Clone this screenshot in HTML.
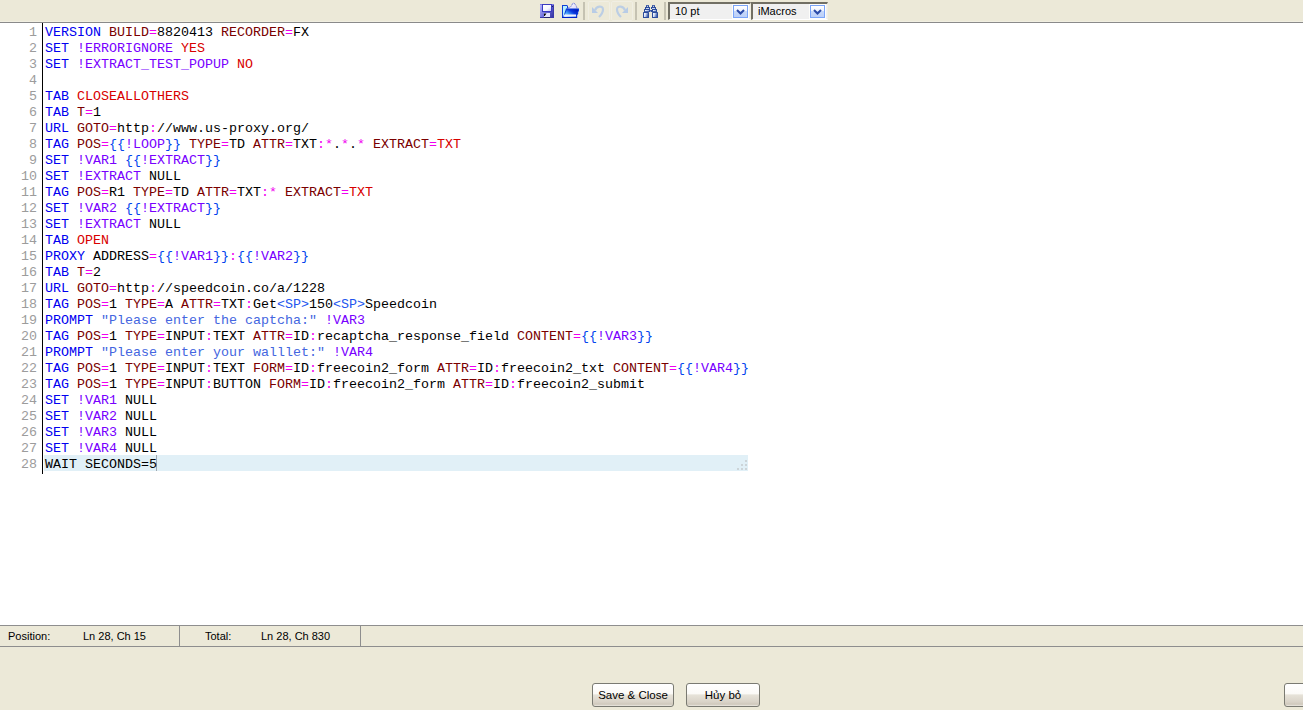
<!DOCTYPE html>
<html><head><meta charset="utf-8">
<style>
*{margin:0;padding:0;box-sizing:border-box}
html,body{width:1303px;height:710px;overflow:hidden;background:#ECE9D8;font-family:"Liberation Sans",sans-serif}
#tb{position:absolute;left:0;top:0;width:1303px;height:23px;background:#ECE9D8;border-bottom:1px solid #8A8A8A}
#tb .hl{position:absolute;left:0;top:21px;width:1303px;height:1px;background:#F1EFE2}
.ic{position:absolute}
.sep{position:absolute;top:2px;width:2px;height:18px;background:#C5C2B2}
.combo{position:absolute;top:2px;height:18px;background:#F0F0F0;border-top:2px solid #716F64;border-left:2px solid #716F64;border-right:1px solid #F1EFE2;border-bottom:1px solid #FFFFFF}
.combo .t{position:absolute;left:5px;top:1px;font-size:11px;color:#000;line-height:13px}
.combo .btn{position:absolute;top:1px;width:15px;height:13px;border:1px solid #7AA4F8;box-shadow:0 0 0 1px #FDFDFB;background:linear-gradient(#FFFFFF 0%,#EEF3FE 45%,#C6D8FA 50%,#BCD0F8 100%)}
#ed{position:absolute;left:0;top:23px;width:1303px;height:602px;background:#fff}
#gut{position:absolute;left:42px;top:23px;width:1px;height:451px;background:#000}
.ln{position:absolute;left:0;width:37px;text-align:right;font-family:"Liberation Mono",monospace;font-size:13.33px;color:#9C9C9C;line-height:16px}
.cl{position:absolute;left:45px;white-space:pre;font-family:"Liberation Mono",monospace;font-size:13.33px;color:#000;line-height:16px}
i{font-style:normal}.k{color:#0000F0}.p{color:#7A0000}.e{color:#F000F0}.r{color:#D80000}.b{color:#0044EE}.v{color:#7800FF}.s{color:#4466E0}.x{color:#2255EE}
#cur{position:absolute;left:44px;top:455px;width:704px;height:16px;background:#E1F0F7}
#status{position:absolute;left:0;top:625px;width:1303px;height:22px;background:#ECE9D8;border-top:1px solid #8E8E8E;border-bottom:1px solid #8E8E8E}
.st{position:absolute;top:4px;font-size:11px;color:#000;line-height:13px}
.dv{position:absolute;top:0;width:1px;height:20px;background:#8E8E8E}
.bt{position:absolute;top:683px;height:24px;border:1px solid #7A7A72;border-radius:3px;background:linear-gradient(#FFFFFF 0%,#FBFAF7 44%,#E6E2D8 50%,#D9D3C8 82%,#CFC8BC 92%,#ECEAE3 100%);font-size:11.5px;line-height:23px;text-align:center;color:#000}
</style></head><body>
<div id="tb"><div class="hl"></div>
<svg class="ic" style="left:540px;top:4px" width="14" height="14" viewBox="0 0 14 14">
<defs><linearGradient id="fl" x1="0" y1="0.2" x2="1" y2="0.8"><stop offset="0" stop-color="#B0B0FA"/><stop offset="0.45" stop-color="#7070DC"/><stop offset="1" stop-color="#3636A4"/></linearGradient>
<linearGradient id="lb" x1="0" y1="0" x2="1" y2="1"><stop offset="0" stop-color="#FFFFFF"/><stop offset="0.6" stop-color="#F6F6FF"/><stop offset="1" stop-color="#C8C8F0"/></linearGradient></defs>
<rect x="0" y="0" width="14" height="14" rx="0.5" fill="url(#fl)"/>
<rect x="13" y="0" width="1" height="14" fill="#3A3AA8"/>
<rect x="0" y="13" width="14" height="1" fill="#3A3AA8"/>
<rect x="0" y="0" width="14" height="1" fill="#7A7AE0"/>
<rect x="2" y="0" width="10" height="8" fill="#3A3AC0"/>
<rect x="3" y="1" width="8" height="6" fill="url(#lb)"/>
<rect x="12" y="2" width="1" height="1" fill="#202060"/>
<rect x="4" y="9" width="6" height="4.5" fill="#E4E4FF"/>
<path d="M4 9.5h2.5l-1.8 2.5h-0.7z" fill="#000"/>
<rect x="4" y="13" width="6" height="1" fill="#262670"/>
</svg>
<svg class="ic" style="left:561px;top:2px" width="19" height="17" viewBox="0 0 19 17">
<defs><linearGradient id="fo" x1="0" y1="1" x2="1" y2="0.2"><stop offset="0" stop-color="#E0FCFF"/><stop offset="0.35" stop-color="#50B0FA"/><stop offset="0.7" stop-color="#0838E0"/><stop offset="1" stop-color="#0018B8"/></linearGradient>
<linearGradient id="pp" x1="0" y1="0" x2="1" y2="1"><stop offset="0" stop-color="#FFFFFF"/><stop offset="1" stop-color="#D8D4F8"/></linearGradient></defs>
<path d="M1 3h5l1 1v12h-6z" fill="#1040D8"/>
<path d="M2 4h4v11h-4z" fill="#B4F0FF"/>
<path d="M5.5 7l4.5-2.5l2-3.5h1l2 2.5l1 2.5v2h-10.5z" fill="url(#pp)" stroke="#5060D0" stroke-width="0.9" stroke-dasharray="1 0.7"/>
<path d="M5 6.5h13v2.5l-0.8 1v2l-1 1v3h-14.2z" fill="#0838D8"/>
<path d="M5.8 7.5h11.2v1.5l-0.8 1v2l-1 1v2h-12.2z" fill="url(#fo)"/>
<path d="M3.3 12.5h11.7v2h-12.2z" fill="#F2EEFF"/>
<path d="M1 15h15v1h-15z" fill="#0020C8"/>
</svg>
<div class="sep" style="left:583px"></div>
<svg class="ic" style="left:591px;top:2px" width="14" height="17" viewBox="0 0 14 17">
<path d="M1 5v6h6z" fill="#B8CCE6"/>
<path d="M4 8.5C5 4 12 3 12 7.5C12 10.5 10 13 8 15" fill="none" stroke="#BCCEE4" stroke-width="2.2"/>
</svg>
<svg class="ic" style="left:615px;top:2px" width="14" height="17" viewBox="0 0 14 17">
<g transform="translate(14,0) scale(-1,1)">
<path d="M1 5v6h6z" fill="#B8CCE6"/>
<path d="M4 8.5C5 4 12 3 12 7.5C12 10.5 10 13 8 15" fill="none" stroke="#BCCEE4" stroke-width="2.2"/>
</g></svg>
<div class="sep" style="left:635px"></div>
<div style="position:absolute;left:588px;top:1px;width:22px;height:20px;border:1px solid #F0EEE3;border-radius:2px"></div>
<div style="position:absolute;left:611px;top:1px;width:22px;height:20px;border:1px solid #F0EEE3;border-radius:2px"></div>
<svg class="ic" style="left:643px;top:5px" width="15" height="13" viewBox="0 0 15 13">
<defs><linearGradient id="bn" x1="0" y1="0" x2="1" y2="0.3"><stop offset="0" stop-color="#FFFFFF"/><stop offset="0.45" stop-color="#D0DCF4"/><stop offset="1" stop-color="#4A68B0"/></linearGradient>
<linearGradient id="bu" x1="0" y1="0" x2="1" y2="0"><stop offset="0" stop-color="#F4F8FF"/><stop offset="1" stop-color="#90A8D8"/></linearGradient></defs>
<g fill="#2C4C9C">
<rect x="3" y="0" width="3" height="2" rx="0.6"/><rect x="2" y="2" width="5" height="2"/><rect x="1" y="4" width="6" height="3"/><rect x="0" y="7" width="6" height="6" rx="0.5"/>
<rect x="9" y="0" width="3" height="2" rx="0.6"/><rect x="8" y="2" width="5" height="2"/><rect x="9" y="4" width="5" height="3"/><rect x="9" y="7" width="6" height="6" rx="0.5"/>
<rect x="6" y="5" width="3" height="2"/>
</g>
<rect x="1" y="8" width="4" height="4" fill="url(#bn)"/><rect x="10" y="8" width="4" height="4" fill="url(#bn)"/>
<rect x="2" y="5" width="4" height="1.2" fill="url(#bu)"/><rect x="10" y="5" width="3" height="1.2" fill="url(#bu)"/>
<rect x="3" y="3" width="3" height="0.9" fill="#D8E2F6"/><rect x="9" y="3" width="3" height="0.9" fill="#D8E2F6"/>
<rect x="4" y="0.8" width="1" height="1" fill="#E8EEFA"/><rect x="10" y="0.8" width="1" height="1" fill="#E8EEFA"/>
<rect x="7" y="5.8" width="1" height="1" fill="#A8B8E0"/>
</svg>
<div class="sep" style="left:664px"></div>
<div class="combo" style="left:668px;width:83px"><div class="t">10 pt</div><div class="btn" style="left:63px"><svg width="13" height="12" viewBox="0 0 13 12" style="position:absolute;left:0;top:0"><path d="M3 4l3.5 3.5l3.5-3.5" fill="none" stroke="#2A4AA8" stroke-width="2"/></svg></div></div>
<div class="combo" style="left:751px;width:77px"><div class="t">iMacros</div><div class="btn" style="left:57px"><svg width="13" height="12" viewBox="0 0 13 12" style="position:absolute;left:0;top:0"><path d="M3 4l3.5 3.5l3.5-3.5" fill="none" stroke="#2A4AA8" stroke-width="2"/></svg></div></div>
</div>
<div id="ed"></div>
<div id="cur"></div>
<div style="position:absolute;left:156px;top:455px;width:1px;height:16px;background:#A0A8B0"></div>
<div style="position:absolute;left:745px;top:460px;width:2px;height:2px;background:#CCD4D8"></div>
<div style="position:absolute;left:741px;top:464px;width:2px;height:2px;background:#CCD4D8"></div>
<div style="position:absolute;left:745px;top:464px;width:2px;height:2px;background:#CCD4D8"></div>
<div style="position:absolute;left:737px;top:468px;width:2px;height:2px;background:#CCD4D8"></div>
<div style="position:absolute;left:741px;top:468px;width:2px;height:2px;background:#CCD4D8"></div>
<div style="position:absolute;left:745px;top:468px;width:2px;height:2px;background:#CCD4D8"></div>
<div id="gut"></div>
<div id="lines">
<div class="ln" style="top:25px">1</div><div class="cl" style="top:25px"><i class="k">VERSION</i> <i class="p">BUILD</i><i class="e">=</i>8820413 <i class="p">RECORDER</i><i class="e">=</i>FX</div>
<div class="ln" style="top:41px">2</div><div class="cl" style="top:41px"><i class="k">SET</i> <i class="v">!ERRORIGNORE</i> <i class="r">YES</i></div>
<div class="ln" style="top:57px">3</div><div class="cl" style="top:57px"><i class="k">SET</i> <i class="v">!EXTRACT_TEST_POPUP</i> <i class="r">NO</i></div>
<div class="ln" style="top:73px">4</div><div class="cl" style="top:73px"></div>
<div class="ln" style="top:89px">5</div><div class="cl" style="top:89px"><i class="k">TAB</i> <i class="r">CLOSEALLOTHERS</i></div>
<div class="ln" style="top:105px">6</div><div class="cl" style="top:105px"><i class="k">TAB</i> <i class="p">T</i><i class="e">=</i>1</div>
<div class="ln" style="top:121px">7</div><div class="cl" style="top:121px"><i class="k">URL</i> <i class="p">GOTO</i><i class="e">=</i>http<i class="e">:</i>//www.us-proxy.org/</div>
<div class="ln" style="top:137px">8</div><div class="cl" style="top:137px"><i class="k">TAG</i> <i class="p">POS</i><i class="e">=</i><i class="b">{{</i><i class="v">!LOOP</i><i class="b">}}</i> <i class="p">TYPE</i><i class="e">=</i>TD <i class="p">ATTR</i><i class="e">=</i>TXT<i class="e">:*</i>.<i class="e">*</i>.<i class="e">*</i> <i class="p">EXTRACT</i><i class="e">=</i><i class="r">TXT</i></div>
<div class="ln" style="top:153px">9</div><div class="cl" style="top:153px"><i class="k">SET</i> <i class="v">!VAR1</i> <i class="b">{{</i><i class="v">!EXTRACT</i><i class="b">}}</i></div>
<div class="ln" style="top:169px">10</div><div class="cl" style="top:169px"><i class="k">SET</i> <i class="v">!EXTRACT</i> NULL</div>
<div class="ln" style="top:185px">11</div><div class="cl" style="top:185px"><i class="k">TAG</i> <i class="p">POS</i><i class="e">=</i>R1 <i class="p">TYPE</i><i class="e">=</i>TD <i class="p">ATTR</i><i class="e">=</i>TXT<i class="e">:*</i> <i class="p">EXTRACT</i><i class="e">=</i><i class="r">TXT</i></div>
<div class="ln" style="top:201px">12</div><div class="cl" style="top:201px"><i class="k">SET</i> <i class="v">!VAR2</i> <i class="b">{{</i><i class="v">!EXTRACT</i><i class="b">}}</i></div>
<div class="ln" style="top:217px">13</div><div class="cl" style="top:217px"><i class="k">SET</i> <i class="v">!EXTRACT</i> NULL</div>
<div class="ln" style="top:233px">14</div><div class="cl" style="top:233px"><i class="k">TAB</i> <i class="r">OPEN</i></div>
<div class="ln" style="top:249px">15</div><div class="cl" style="top:249px"><i class="k">PROXY</i> ADDRESS<i class="e">=</i><i class="b">{{</i><i class="v">!VAR1</i><i class="b">}}</i><i class="e">:</i><i class="b">{{</i><i class="v">!VAR2</i><i class="b">}}</i></div>
<div class="ln" style="top:265px">16</div><div class="cl" style="top:265px"><i class="k">TAB</i> <i class="p">T</i><i class="e">=</i>2</div>
<div class="ln" style="top:281px">17</div><div class="cl" style="top:281px"><i class="k">URL</i> <i class="p">GOTO</i><i class="e">=</i>http<i class="e">:</i>//speedcoin.co/a/1228</div>
<div class="ln" style="top:297px">18</div><div class="cl" style="top:297px"><i class="k">TAG</i> <i class="p">POS</i><i class="e">=</i>1 <i class="p">TYPE</i><i class="e">=</i>A <i class="p">ATTR</i><i class="e">=</i>TXT<i class="e">:</i>Get<i class="x">&lt;SP&gt;</i>150<i class="x">&lt;SP&gt;</i>Speedcoin</div>
<div class="ln" style="top:313px">19</div><div class="cl" style="top:313px"><i class="k">PROMPT</i> <i class="s">"Please enter the captcha:"</i> <i class="v">!VAR3</i></div>
<div class="ln" style="top:329px">20</div><div class="cl" style="top:329px"><i class="k">TAG</i> <i class="p">POS</i><i class="e">=</i>1 <i class="p">TYPE</i><i class="e">=</i>INPUT<i class="e">:</i>TEXT <i class="p">ATTR</i><i class="e">=</i>ID<i class="e">:</i>recaptcha_response_field <i class="p">CONTENT</i><i class="e">=</i><i class="b">{{</i><i class="v">!VAR3</i><i class="b">}}</i></div>
<div class="ln" style="top:345px">21</div><div class="cl" style="top:345px"><i class="k">PROMPT</i> <i class="s">"Please enter your walllet:"</i> <i class="v">!VAR4</i></div>
<div class="ln" style="top:361px">22</div><div class="cl" style="top:361px"><i class="k">TAG</i> <i class="p">POS</i><i class="e">=</i>1 <i class="p">TYPE</i><i class="e">=</i>INPUT<i class="e">:</i>TEXT <i class="p">FORM</i><i class="e">=</i>ID<i class="e">:</i>freecoin2_form <i class="p">ATTR</i><i class="e">=</i>ID<i class="e">:</i>freecoin2_txt <i class="p">CONTENT</i><i class="e">=</i><i class="b">{{</i><i class="v">!VAR4</i><i class="b">}}</i></div>
<div class="ln" style="top:377px">23</div><div class="cl" style="top:377px"><i class="k">TAG</i> <i class="p">POS</i><i class="e">=</i>1 <i class="p">TYPE</i><i class="e">=</i>INPUT<i class="e">:</i>BUTTON <i class="p">FORM</i><i class="e">=</i>ID<i class="e">:</i>freecoin2_form <i class="p">ATTR</i><i class="e">=</i>ID<i class="e">:</i>freecoin2_submit</div>
<div class="ln" style="top:393px">24</div><div class="cl" style="top:393px"><i class="k">SET</i> <i class="v">!VAR1</i> NULL</div>
<div class="ln" style="top:409px">25</div><div class="cl" style="top:409px"><i class="k">SET</i> <i class="v">!VAR2</i> NULL</div>
<div class="ln" style="top:425px">26</div><div class="cl" style="top:425px"><i class="k">SET</i> <i class="v">!VAR3</i> NULL</div>
<div class="ln" style="top:441px">27</div><div class="cl" style="top:441px"><i class="k">SET</i> <i class="v">!VAR4</i> NULL</div>
<div class="ln" style="top:457px">28</div><div class="cl" style="top:457px">WAIT SECONDS=5</div>
</div><!--/lines-->
<div id="status">
<div class="st" style="left:8px">Position:</div>
<div class="st" style="left:83px">Ln 28, Ch 15</div>
<div class="dv" style="left:179px"></div>
<div class="st" style="left:205px">Total:</div>
<div class="st" style="left:261px">Ln 28, Ch 830</div>
<div class="dv" style="left:360px"></div>
</div>
<div class="bt" style="left:592px;width:82px">Save &amp; Close</div>
<div class="bt" style="left:686px;width:74px">Hủy bỏ</div>
<div class="bt" style="left:1284px;width:40px"></div>
</body></html>
